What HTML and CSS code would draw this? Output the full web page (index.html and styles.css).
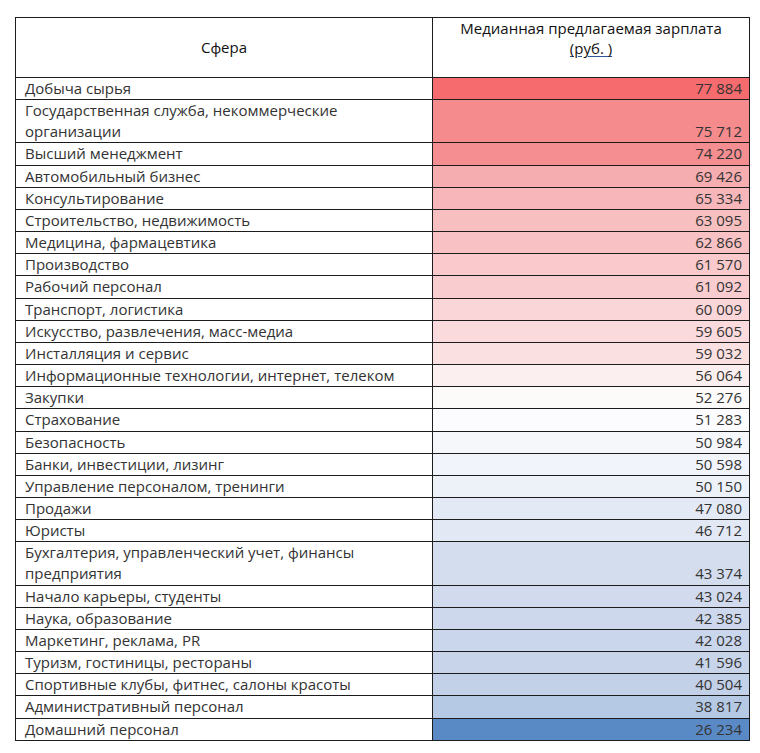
FILE: index.html
```html
<!DOCTYPE html>
<html lang="ru">
<head>
<meta charset="utf-8">
<title>Медианная предлагаемая зарплата</title>
<link rel="stylesheet" href="styles.css">
</head>
<body>
<table class="salary">
  <colgroup><col class="col-name"><col class="col-value"></colgroup>
  <thead>
    <tr>
      <th class="h-name">Сфера</th>
      <th class="h-value">Медианная предлагаемая зарплата<br><span class="unit">(руб. )</span></th>
    </tr>
  </thead>
  <tbody>
    <tr><td class="name">Добыча сырья</td><td class="val" style="background:#f66b6d">77 884</td></tr>
    <tr><td class="name">Государственная служба, некоммерческие организации</td><td class="val" style="background:#f58b8d">75 712</td></tr>
    <tr><td class="name">Высший менеджмент</td><td class="val" style="background:#f48e90">74 220</td></tr>
    <tr><td class="name">Автомобильный бизнес</td><td class="val" style="background:#f6adb0">69 426</td></tr>
    <tr><td class="name">Консультирование</td><td class="val" style="background:#f7b7ba">65 334</td></tr>
    <tr><td class="name">Строительство, недвижимость</td><td class="val" style="background:#f8bfc1">63 095</td></tr>
    <tr><td class="name">Медицина, фармацевтика</td><td class="val" style="background:#f8c1c3">62 866</td></tr>
    <tr><td class="name">Производство</td><td class="val" style="background:#f9c9cb">61 570</td></tr>
    <tr><td class="name">Рабочий персонал</td><td class="val" style="background:#f9cccf">61 092</td></tr>
    <tr><td class="name">Транспорт, логистика</td><td class="val" style="background:#fad6d8">60 009</td></tr>
    <tr><td class="name">Искусство, развлечения, масс-медиа</td><td class="val" style="background:#fadadc">59 605</td></tr>
    <tr><td class="name">Инсталляция и сервис</td><td class="val" style="background:#fbe0e2">59 032</td></tr>
    <tr><td class="name">Информационные технологии, интернет, телеком</td><td class="val" style="background:#fcefef">56 064</td></tr>
    <tr><td class="name">Закупки</td><td class="val" style="background:#fdfafa">52 276</td></tr>
    <tr><td class="name">Страхование</td><td class="val" style="background:#fcfcfe">51 283</td></tr>
    <tr><td class="name">Безопасность</td><td class="val" style="background:#f5f7fb">50 984</td></tr>
    <tr><td class="name">Банки, инвестиции, лизинг</td><td class="val" style="background:#f1f4fa">50 598</td></tr>
    <tr><td class="name">Управление персоналом, тренинги</td><td class="val" style="background:#edf1f8">50 150</td></tr>
    <tr><td class="name">Продажи</td><td class="val" style="background:#e4eaf5">47 080</td></tr>
    <tr><td class="name">Юристы</td><td class="val" style="background:#e2e8f4">46 712</td></tr>
    <tr><td class="name">Бухгалтерия, управленческий учет, финансы предприятия</td><td class="val" style="background:#d3ddee">43 374</td></tr>
    <tr><td class="name">Начало карьеры, студенты</td><td class="val" style="background:#d1dbed">43 024</td></tr>
    <tr><td class="name">Наука, образование</td><td class="val" style="background:#cdd8ec">42 385</td></tr>
    <tr><td class="name">Маркетинг, реклама, PR</td><td class="val" style="background:#cad6eb">42 028</td></tr>
    <tr><td class="name">Туризм, гостиницы, рестораны</td><td class="val" style="background:#c8d4ea">41 596</td></tr>
    <tr><td class="name">Спортивные клубы, фитнес, салоны красоты</td><td class="val" style="background:#c2d0e8">40 504</td></tr>
    <tr><td class="name">Административный персонал</td><td class="val" style="background:#b6c9e4">38 817</td></tr>
    <tr><td class="name">Домашний персонал</td><td class="val" style="background:#5a8ac6">26 234</td></tr>
  </tbody>
</table>
</body>
</html>
```

FILE: styles.css
```css
html, body {
  margin: 0;
  padding: 0;
  background: #ffffff;
}

body {
  padding: 17px 0 0 15px;
  font-family: "Open Sans", "Liberation Sans", sans-serif;
  font-size: 15px;
  color: #333333;
}

.salary {
  border-collapse: collapse;
  table-layout: fixed;
  width: 734px;
}

.col-name { width: 417px; }
.col-value { width: 317px; }

.salary th,
.salary td {
  border: 1px solid #1c1c1c;
  padding: 0;
  line-height: 21.15px;
}

.salary th {
  height: 59px;
  font-weight: normal;
  color: #111111;
  text-align: center;
}

.salary .h-name {
  vertical-align: middle;
}

.salary .h-value {
  vertical-align: top;
  line-height: 20px;
  padding-top: 0;
}

.unit {
  text-decoration: underline;
  text-decoration-color: #2f5597;
  text-underline-offset: 2px;
}

.salary .name {
  padding-left: 9px;
  vertical-align: top;
}

.salary .val {
  text-align: right;
  vertical-align: bottom;
  padding-right: 7px;
}
```
